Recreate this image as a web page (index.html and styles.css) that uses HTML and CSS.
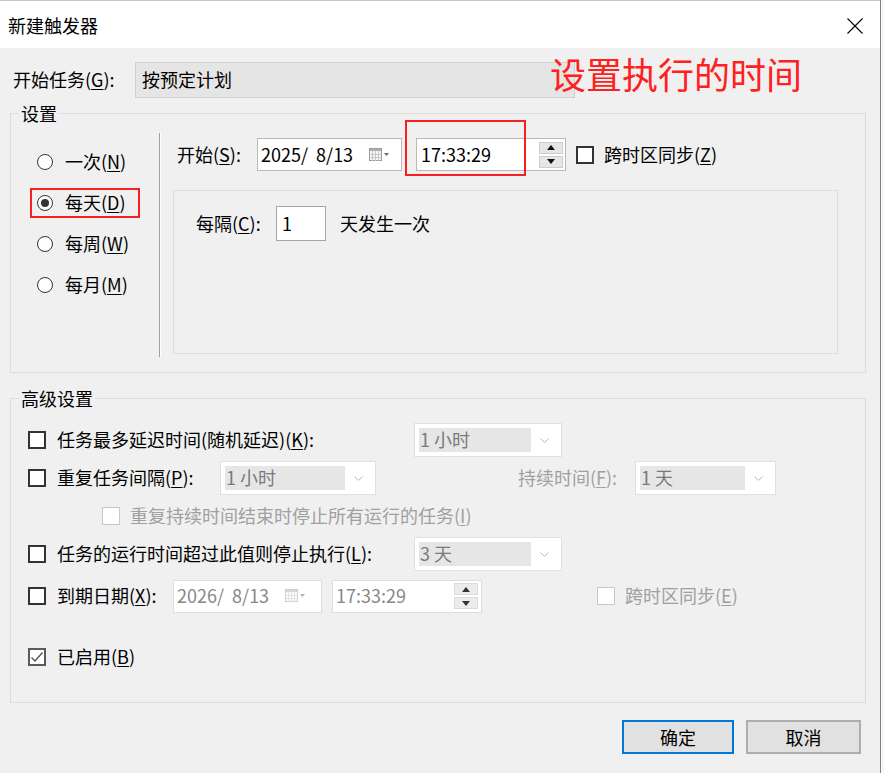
FILE: index.html
```html
<!DOCTYPE html>
<html lang="zh-CN">
<head>
    <meta charset="UTF-8">
    <title>新建触发器</title>
    <link rel="stylesheet" href="styles.css">
</head>
<body>
    <div class="screen">
        <div class="dialog">
            <div class="titlebar">
                <span class="title">新建触发器</span>
                <svg class="close-icon" width="16" height="16" viewBox="0 0 16 16">
                    <path d="M0.5 0.5 15.5 15.5M15.5 0.5 0.5 15.5" stroke="#000" stroke-width="1.1" fill="none"/>
                </svg>
            </div>

            <div class="content">
                <div class="begin-row">
                    <span class="begin-label">开始任务(<u>G</u>):</span>
                    <div class="select-flat">按预定计划</div>
                </div>

                <fieldset class="group">
                    <legend>设置</legend>
                    <div class="settings-body">
                        <div class="freq">
                            <div class="freq-item"><label class="radio-row"><span class="radio"></span>一次(<u>N</u>)</label></div>
                            <div class="freq-item"><label class="radio-row marked"><span class="radio on"></span>每天(<u>D</u>)</label></div>
                            <div class="freq-item"><label class="radio-row"><span class="radio"></span>每周(<u>W</u>)</label></div>
                            <div class="freq-item"><label class="radio-row"><span class="radio"></span>每月(<u>M</u>)</label></div>
                        </div>
                        <div class="divider"></div>
                        <div class="schedule">
                            <div class="start-row">
                                <span class="start-label">开始(<u>S</u>):</span>
                                <div class="field date-field">
                                    <span>2025/&nbsp; 8/13</span>
                                    <svg class="cal-icon" width="22" height="14" viewBox="0 0 22 14">
                                        <rect x="0.5" y="0.5" width="12" height="12" fill="#f6f6f6" stroke="#9a9a9a"/>
                                        <rect x="1" y="1" width="11" height="2" fill="#b0b0b0"/>
                                        <path d="M0.5 6.5h12M0.5 9.5h12M3.5 3v10M6.5 3v10M9.5 3v10" stroke="#c8c8c8" fill="none"/>
                                        <path d="M15 5h5l-2.5 3z" fill="#6a6a6a"/>
                                    </svg>
                                </div>
                                <div class="field time-field">
                                    <span>17:33:29</span>
                                    <div class="spin">
                                        <span class="spin-btn"><svg width="8" height="5" viewBox="0 0 8 5"><path d="M0 5h8L4 0z" fill="#111"/></svg></span>
                                        <span class="spin-btn"><svg width="8" height="5" viewBox="0 0 8 5"><path d="M0 0h8L4 5z" fill="#111"/></svg></span>
                                    </div>
                                </div>
                                <span class="cb"></span>
                                <span class="cb-label">跨时区同步(<u>Z</u>)</span>
                            </div>
                            <div class="recur-panel">
                                <div class="recur-row">
                                    <span class="recur-label">每隔(<u>C</u>):</span>
                                    <div class="field num-field">1</div>
                                    <span class="recur-text">天发生一次</span>
                                </div>
                            </div>
                        </div>
                    </div>
                </fieldset>

                <fieldset class="group advanced">
                    <legend>高级设置</legend>

                    <div class="adv-row">
                        <span class="cb"></span>
                        <span class="adv-label lbl-wide">任务最多延迟时间(随机延迟)(<u>K</u>):</span>
                        <div class="combo combo-148">
                            <span class="combo-value">1 小时</span>
                            <span class="combo-arrow"><svg width="9" height="5" viewBox="0 0 9 5"><path d="M0.5 0.5 4.5 4.5 8.5 0.5" fill="none" stroke="#b8b8b8"/></svg></span>
                        </div>
                    </div>

                    <div class="adv-row">
                        <span class="cb"></span>
                        <span class="adv-label lbl-repeat">重复任务间隔(<u>P</u>):</span>
                        <div class="combo combo-156">
                            <span class="combo-value">1 小时</span>
                            <span class="combo-arrow"><svg width="9" height="5" viewBox="0 0 9 5"><path d="M0.5 0.5 4.5 4.5 8.5 0.5" fill="none" stroke="#b8b8b8"/></svg></span>
                        </div>
                        <span class="muted duration-label">持续时间(<u>F</u>):</span>
                        <div class="combo combo-141">
                            <span class="combo-value">1 天</span>
                            <span class="combo-arrow"><svg width="9" height="5" viewBox="0 0 9 5"><path d="M0.5 0.5 4.5 4.5 8.5 0.5" fill="none" stroke="#b8b8b8"/></svg></span>
                        </div>
                    </div>

                    <div class="adv-row sub-row">
                        <span class="cb off"></span>
                        <span class="muted sub-label">重复持续时间结束时停止所有运行的任务(<u>I</u>)</span>
                    </div>

                    <div class="adv-row">
                        <span class="cb"></span>
                        <span class="adv-label lbl-wide">任务的运行时间超过此值则停止执行(<u>L</u>):</span>
                        <div class="combo combo-148">
                            <span class="combo-value">3 天</span>
                            <span class="combo-arrow"><svg width="9" height="5" viewBox="0 0 9 5"><path d="M0.5 0.5 4.5 4.5 8.5 0.5" fill="none" stroke="#b8b8b8"/></svg></span>
                        </div>
                    </div>

                    <div class="adv-row expire-row">
                        <span class="cb"></span>
                        <span class="adv-label lbl-expire">到期日期(<u>X</u>):</span>
                        <div class="field off-field exp-date">
                            <span>2026/&nbsp; 8/13</span>
                            <svg class="cal-icon faded" width="22" height="14" viewBox="0 0 22 14">
                                <rect x="0.5" y="0.5" width="12" height="12" fill="#f6f6f6" stroke="#9a9a9a"/>
                                <rect x="1" y="1" width="11" height="2" fill="#b0b0b0"/>
                                <path d="M0.5 6.5h12M0.5 9.5h12M3.5 3v10M6.5 3v10M9.5 3v10" stroke="#c8c8c8" fill="none"/>
                                <path d="M15 5h5l-2.5 3z" fill="#6a6a6a"/>
                            </svg>
                        </div>
                        <div class="field off-field exp-time">
                            <span>17:33:29</span>
                            <div class="spin">
                                <span class="spin-btn"><svg width="8" height="5" viewBox="0 0 8 5"><path d="M0 5h8L4 0z" fill="#333"/></svg></span>
                                <span class="spin-btn"><svg width="8" height="5" viewBox="0 0 8 5"><path d="M0 0h8L4 5z" fill="#333"/></svg></span>
                            </div>
                        </div>
                        <span class="cb off tz-off"></span>
                        <span class="muted cb-label">跨时区同步(<u>E</u>)</span>
                    </div>

                    <div class="adv-row enabled-row">
                        <span class="cb checked">
                            <svg width="14" height="14" viewBox="0 0 14 14"><path d="M1.5 7.5 5 11 12.5 2.5" fill="none" stroke="#555" stroke-width="1.4"/></svg>
                        </span>
                        <span class="cb-text">已启用(<u>B</u>)</span>
                    </div>
                </fieldset>

                <div class="actions">
                    <button type="button" class="btn primary">确定</button>
                    <button type="button" class="btn">取消</button>
                </div>
            </div>

            <!-- annotations drawn over the dialog -->
            <div class="note">设置执行的时间</div>
            <div class="note-box"></div>
        </div>
        <div class="edge"></div>
    </div>
</body>
</html>
```

FILE: styles.css
```css
body {
    margin: 0;
    padding: 0;
    background-color: #f0f0f0;
    font-family: "Noto Sans CJK SC", "Noto Sans", sans-serif;
    font-size: 18px;
    color: #000;
    line-height: 1.3;
}
u {
    text-underline-offset: 2px;
    text-decoration-thickness: 1px;
}
.screen {
    display: flex;
    width: 884px;
    height: 773px;
    overflow: hidden;
}
.dialog {
    position: relative;
    width: 880px;
    flex-shrink: 0;
    background-color: #f0f0f0;
    border-right: 1px solid #808080;
}
.edge {
    flex: 1;
    background-color: #f7f7f7;
}
.titlebar {
    height: 48px;
    box-sizing: border-box;
    border-top: 1px solid #c4c4c4;
    padding: 3px 17px 0 8px;
    background-color: #fff;
    display: flex;
    align-items: center;
    justify-content: space-between;
}
.title {
    font-size: 18px;
}
.content {
    padding: 0 14px 0 10px;
}
.begin-row {
    margin-top: 14px;
    height: 36px;
    display: flex;
    align-items: center;
}
.begin-label {
    margin-left: 3px;
    width: 122px;
}
.select-flat {
    width: 440px;
    height: 36px;
    box-sizing: border-box;
    background-color: #e5e5e5;
    border: 1px solid #cfcfcf;
    padding-left: 6px;
    display: flex;
    align-items: center;
}
.group {
    margin: 3px 0 0 0;
    padding: 0;
    width: 856px;
    box-sizing: border-box;
    border: 1px solid #dcdcdc;
    min-inline-size: 0;
}
.group legend {
    margin-left: 8px;
    padding: 0 2px;
    line-height: 24px;
}
.settings-body {
    display: flex;
    height: 247px;
}
.freq {
    width: 148px;
    box-sizing: border-box;
    padding: 16px 0 0 19px;
}
.freq-item {
    height: 41px;
    display: flex;
    align-items: center;
}
.radio-row {
    height: 30px;
    box-sizing: border-box;
    border: 2px solid transparent;
    padding: 0 12px 0 5px;
    display: inline-flex;
    align-items: center;
}
.radio-row.marked {
    border-color: #f32121;
}
.radio {
    width: 16px;
    height: 16px;
    box-sizing: border-box;
    border: 1.5px solid #333;
    border-radius: 50%;
    background-color: #fff;
    margin-right: 12px;
    display: flex;
    align-items: center;
    justify-content: center;
}
.radio.on::after {
    content: "";
    width: 8px;
    height: 8px;
    border-radius: 50%;
    background-color: #333;
}
.divider {
    margin-top: 8px;
    height: 224px;
    border-left: 1px solid #a0a0a0;
    border-right: 1px solid #fff;
}
.schedule {
    flex: 1;
    padding: 13px 0 0 12px;
}
.start-row {
    height: 33px;
    padding-left: 4px;
    display: flex;
    align-items: center;
}
.start-label {
    width: 80px;
}
.field {
    height: 33px;
    box-sizing: border-box;
    background-color: #fff;
    border: 1px solid #b9b9b9;
    display: flex;
    align-items: center;
    padding-left: 3px;
}
.date-field {
    width: 145px;
    margin-right: 14px;
}
.cal-icon {
    margin-left: auto;
    margin-right: 10px;
}
.cal-icon.faded {
    opacity: 0.5;
    margin-right: 14px;
}
.time-field {
    width: 150px;
    padding-left: 4px;
}
.spin {
    margin-left: auto;
    margin-right: 2px;
    display: flex;
    flex-direction: column;
    gap: 2px;
}
.spin-btn {
    width: 24px;
    height: 12px;
    box-sizing: border-box;
    background-color: #e6e6e6;
    border: 1px solid #cdcdcd;
    display: flex;
    align-items: center;
    justify-content: center;
}
.cb {
    width: 18px;
    height: 18px;
    flex-shrink: 0;
    box-sizing: border-box;
    border: 2px solid #333;
    background-color: #fff;
    display: flex;
    align-items: center;
    justify-content: center;
}
.cb.off {
    border: 1px solid #c8c8c8;
}
.cb.checked {
    border-color: #5a5a5a;
}
.start-row .cb {
    margin-left: 10px;
}
.cb-label {
    margin-left: 10px;
}
.recur-panel {
    margin-top: 19px;
    width: 665px;
    height: 164px;
    box-sizing: border-box;
    border: 1px solid #dcdcdc;
    padding: 15px 0 0 22px;
}
.recur-row {
    height: 35px;
    display: flex;
    align-items: center;
}
.recur-label {
    width: 80px;
}
.num-field {
    width: 50px;
    height: 35px;
    border-color: #a6a6a6;
    padding-left: 5px;
}
.recur-text {
    margin-left: 14px;
}
.advanced {
    margin-top: 13px;
    padding: 11px 0 26px 0;
}
.adv-row {
    height: 38px;
    padding-left: 17px;
    display: flex;
    align-items: center;
}
.adv-label {
    margin-left: 11px;
}
.lbl-wide {
    width: 357px;
}
.lbl-repeat {
    width: 163px;
}
.lbl-expire {
    width: 116px;
}
.muted {
    color: #a0a0a0;
}
.combo {
    height: 34px;
    box-sizing: border-box;
    background-color: #fff;
    border: 1px solid #e0e0e0;
    padding: 4px;
    display: flex;
    align-items: stretch;
}
.combo-148 {
    width: 148px;
}
.combo-156 {
    width: 156px;
}
.combo-141 {
    width: 141px;
}
.combo-value {
    flex: 1;
    background-color: #e6e6e6;
    color: #7a7a7a;
    padding-left: 1px;
    display: flex;
    align-items: center;
}
.combo-arrow {
    width: 26px;
    display: flex;
    align-items: center;
    justify-content: center;
}
.duration-label {
    margin-left: 142px;
    width: 117px;
}
.sub-row .cb {
    margin-left: 74px;
}
.sub-label {
    margin-left: 10px;
}
.expire-row {
    margin-top: 4px;
}
.off-field {
    border-color: #dedede;
    color: #888;
}
.exp-date {
    width: 149px;
    margin-right: 10px;
}
.exp-time {
    width: 150px;
}
.exp-time .spin {
    margin-right: 3px;
}
.exp-time .spin-btn {
    background-color: #ececec;
    border-color: #dcdcdc;
}
.tz-off {
    margin-left: 115px;
}
.enabled-row {
    margin-top: 23px;
}
.cb-text {
    margin-left: 11px;
}
.actions {
    margin-top: 17px;
    padding-right: 5px;
    display: flex;
    justify-content: flex-end;
    gap: 12px;
}
.btn {
    height: 34px;
    box-sizing: border-box;
    background-color: #e1e1e1;
    border: 2px solid #adadad;
    font-family: inherit;
    font-size: 18px;
    color: #000;
    padding: 0;
    width: 115px;
}
.btn.primary {
    width: 112px;
    border-color: #0078d7;
}
.note {
    position: absolute;
    left: 550px;
    top: 55px;
    font-size: 36px;
    line-height: 36px;
    color: #ff2020;
}
.note-box {
    position: absolute;
    left: 405px;
    top: 120px;
    width: 121px;
    height: 56px;
    box-sizing: border-box;
    border: 2px solid #f32121;
}
```
